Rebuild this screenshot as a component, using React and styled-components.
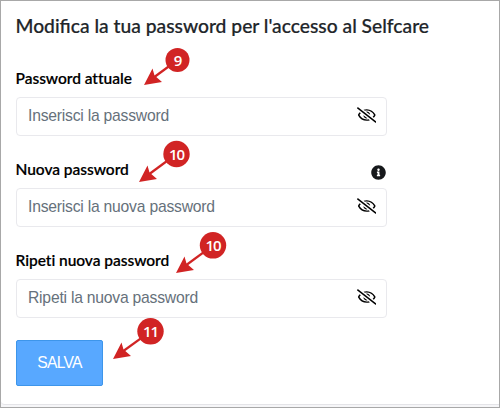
import styled, { createGlobalStyle } from "styled-components";
import { FaInfoCircle, FaRegEyeSlash } from "react-icons/fa";

const GlobalStyle = createGlobalStyle`
  * {
    box-sizing: border-box;
  }

  body {
    margin: 0;
    background: #ffffff;
  }
`;

const Page = styled.main`
  position: relative;
  width: 500px;
  height: 408px;
  padding: 0 0 2px;
  border: 1px solid #a8a8a8;
  background: #f6f6f8;
  overflow: hidden;
`;

const Card = styled.form`
  height: 404px;
  padding: 13px 15px 0;
  border-bottom: 1px solid #e4e4e8;
  border-radius: 0 0 0 4px;
  background: #ffffff;
`;

const Title = styled.h1`
  margin: 0 0 28px -0.5px;
  font-family: Lato, sans-serif;
  font-weight: 500;
  font-size: 19.25px;
  line-height: 24px;
  color: #212529;
  white-space: nowrap;
  -webkit-text-stroke: 0.2px #212529;
`;

const Field = styled.div`
  width: 371px;
  margin-bottom: 21px;

  &:last-of-type {
    margin-bottom: 22px;
  }
`;

const FieldHeader = styled.div`
  display: flex;
  justify-content: space-between;
  height: 31px;
`;

const Label = styled.label`
  margin-left: -0.5px;
  font-family: Lato, sans-serif;
  font-weight: 600;
  font-size: 15.5px;
  line-height: 24px;
  letter-spacing: -0.05px;
  font-variant-ligatures: none;
  color: #000000;
  white-space: nowrap;
  -webkit-text-stroke: 0.15px #000000;
`;

const InfoIcon = styled(FaInfoCircle)`
  width: 15px;
  height: 15px;
  margin: 8px 1px 0 0;
  color: #16181b;
`;

const InputBox = styled.div`
  display: flex;
  align-items: center;
  justify-content: space-between;
  height: 39px;
  padding: 0 10px 1px 11px;
  border: 1px solid #e9e9ed;
  border-radius: 4px;
`;

const Input = styled.input`
  flex: 1;
  min-width: 0;
  padding: 0;
  border: 0;
  outline: 0;
  background: transparent;
  font-family: "Liberation Sans", Arial, sans-serif;
  font-size: 15.7px;
  line-height: 24px;
  letter-spacing: -0.22px;

  &::placeholder {
    color: #66717b;
    opacity: 1;
  }
`;

const HiddenIcon = styled(FaRegEyeSlash)`
  width: 19.5px;
  height: 16px;
  margin-bottom: 2px;
  color: #000000;
`;

const SaveButton = styled.button`
  width: 87px;
  height: 46px;
  padding: 0 0 1px;
  border: 1px solid #3d95ea;
  border-radius: 2px;
  background: #58a8ff;
  font-family: "Liberation Sans", Arial, sans-serif;
  font-size: 15.7px;
  letter-spacing: -0.7px;
  color: #ffffff;
`;

const Marker = styled.svg`
  position: absolute;
  left: ${({ $x }) => $x}px;
  top: ${({ $y }) => $y}px;
  overflow: visible;
  pointer-events: none;
  fill: #d12424;

  text {
    font-family: "Open Sans", sans-serif;
    font-weight: 600;
    font-size: 15px;
    letter-spacing: -1px;
    text-anchor: middle;
    fill: #ffffff;
  }
`;

const fields = [
  { id: "current", label: "Password attuale", placeholder: "Inserisci la password" },
  { id: "new", label: "Nuova password", placeholder: "Inserisci la nuova password", info: true },
  { id: "repeat", label: "Ripeti nuova password", placeholder: "Ripeti la nuova password" },
];

// x and y are the arrow tip, cx and cy the badge centre measured from it
const markers = [
  { x: 143, y: 83, cx: 33.5, cy: -24, r: 12, text: "9" },
  { x: 138, y: 180, cx: 37.5, cy: -27, r: 13.2, text: "10" },
  { x: 175, y: 270.5, cx: 37, cy: -26.7, r: 13.2, text: "10" },
  { x: 112, y: 357, cx: 37.5, cy: -26.7, r: 13.2, text: "11" },
];

export default function App() {
  return (
    <>
      <GlobalStyle />
      <Page>
        <Card>
          <Title>Modifica la tua password per l&apos;accesso al Selfcare</Title>
          {fields.map((field) => (
            <Field key={field.id}>
              <FieldHeader>
                <Label htmlFor={field.id}>{field.label}</Label>
                {field.info && <InfoIcon />}
              </FieldHeader>
              <InputBox>
                <Input id={field.id} type="text" placeholder={field.placeholder} />
                <HiddenIcon />
              </InputBox>
            </Field>
          ))}
          <SaveButton type="button">SALVA</SaveButton>
        </Card>

        {markers.map((m) => (
          <Marker key={`${m.x}-${m.y}`} $x={m.x} $y={m.y} width="1" height="1">
            <path d="M0 1 L8.5 -15.5 L10.5 -8.5 L18 -2 Z" />
            <path d={`M9 -6 L${m.cx} ${m.cy}`} stroke="#d12424" strokeWidth="2.2" />
            <circle cx={m.cx} cy={m.cy} r={m.r} />
            <text x={m.cx} y={m.cy + 5.6}>{m.text}</text>
          </Marker>
        ))}
      </Page>
    </>
  );
}
